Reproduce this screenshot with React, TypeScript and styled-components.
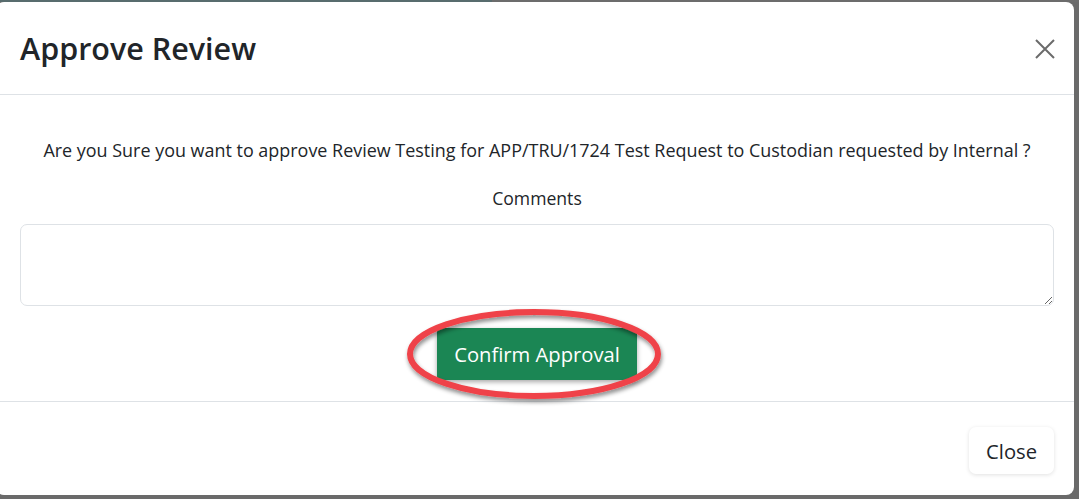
import React from "react";
import styled, { createGlobalStyle } from "styled-components";

const Global = createGlobalStyle`
  html, body { margin: 0; padding: 0; background: #6a6a6a; }
  body { font-family: "Open Sans", "Noto Sans", "DejaVu Sans", sans-serif; color: #212529; }
  * { box-sizing: border-box; }
`;

const Page = styled.div`
  width: 1079px;
  height: 499px;
  overflow: hidden;
  background: #6a6a6a;
  display: flex;
  flex-direction: column;
`;

const TopStrip = styled.div`
  height: 2px;
  flex: none;
  display: grid;
  grid-template-columns: 492px 1fr;
`;

const StripPart = styled.div<{ $color: string }>`
  background: ${(p) => p.$color};
`;

const Modal = styled.div`
  margin-left: -4px;
  width: 1078px;
  height: 493px;
  flex: none;
  background: #fff;
  border-radius: 8px;
  display: flex;
  flex-direction: column;
`;

const Header = styled.div`
  height: 93px;
  flex: none;
  display: flex;
  align-items: center;
  justify-content: space-between;
  padding: 0 16px 0 24px;
  border-bottom: 1px solid #dee2e6;
`;

const Title = styled.h5`
  margin: 0;
  font-size: 30.5px;
  font-weight: 600;
  line-height: 1.2;
  color: #212529;
  padding-top: 1px;
`;

const CloseX = styled.button`
  width: 26px;
  height: 26px;
  border: 0;
  padding: 0;
  background: transparent;
  display: flex;
  align-items: center;
  justify-content: center;
  cursor: pointer;
  margin-top: 1px;
`;

const Body = styled.div`
  position: relative;
  flex: 1;
  padding: 42px 20px 0 24px;
  display: flex;
  flex-direction: column;
  align-items: center;
  border-bottom: 1px solid #dee2e6;
`;

const Question = styled.p`
  margin: 0;
  font-size: 17.95px;
  line-height: 26px;
  white-space: nowrap;
`;

const Label = styled.label`
  margin-top: 22px;
  font-size: 17.6px;
  line-height: 26px;
`;

const Comments = styled.textarea`
  margin-top: 13px;
  width: 100%;
  height: 82px;
  border: 1px solid #dee2e6;
  border-radius: 7px;
  resize: vertical;
  font-family: inherit;
  font-size: 17.6px;
  padding: 6px 12px;
  outline: none;
`;

const ActionWrap = styled.div`
  position: relative;
  margin-top: 22px;
  display: flex;
  justify-content: center;
`;

const ConfirmButton = styled.button`
  height: 52px;
  padding: 0 17px;
  border: 0;
  border-radius: 4px;
  background: #1b8654;
  color: #fff;
  font-family: inherit;
  font-size: 20.2px;
  box-shadow: 0 2px 5px rgba(0, 0, 0, 0.35);
  cursor: pointer;
`;

const Highlight = styled.svg`
  position: absolute;
  left: 50%;
  top: 50%;
  width: 270px;
  height: 100px;
  transform: translate(-50%, -50%);
  overflow: visible;
  pointer-events: none;
`;

const Footer = styled.div`
  flex: none;
  height: 93px;
  display: flex;
  justify-content: flex-end;
  align-items: flex-start;
  padding: 25px 20px 0 0;
`;

const CloseButton = styled.button`
  height: 47px;
  padding: 0 17px;
  border: 0;
  border-radius: 7px;
  background: #fff;
  color: #212529;
  font-family: inherit;
  font-size: 20.2px;
  box-shadow: 0 1px 4px rgba(0, 0, 0, 0.12);
  cursor: pointer;
`;

export default function App() {
  return (
    <>
      <Global />
      <Page>
        <TopStrip>
          <StripPart $color="#586c6e" />
          <StripPart $color="#6c6c6c" />
        </TopStrip>
        <Modal>
          <Header>
            <Title>Approve Review</Title>
            <CloseX aria-label="Close">
              <svg width="20" height="20" viewBox="0 0 20 20">
                <path d="M1 1 L19 19 M19 1 L1 19" stroke="#6b6b6b" strokeWidth="2" fill="none" />
              </svg>
            </CloseX>
          </Header>
          <Body>
            <Question>
              Are you Sure you want to approve Review Testing for APP/TRU/1724 Test Request to Custodian requested by Internal ?
            </Question>
            <Label htmlFor="comments">Comments</Label>
            <Comments id="comments" />
            <ActionWrap>
              <ConfirmButton>Confirm Approval</ConfirmButton>
              <Highlight viewBox="0 0 270 100">
                <defs>
                  <filter id="sh" x="-10%" y="-20%" width="120%" height="150%">
                    <feDropShadow dx="1" dy="3" stdDeviation="2" floodColor="#000" floodOpacity="0.45" />
                  </filter>
                </defs>
                <ellipse cx="132" cy="50" rx="124" ry="42" fill="none" stroke="#ef4348" strokeWidth="6" filter="url(#sh)" />
              </Highlight>
            </ActionWrap>
          </Body>
          <Footer>
            <CloseButton>Close</CloseButton>
          </Footer>
        </Modal>
      </Page>
    </>
  );
}
